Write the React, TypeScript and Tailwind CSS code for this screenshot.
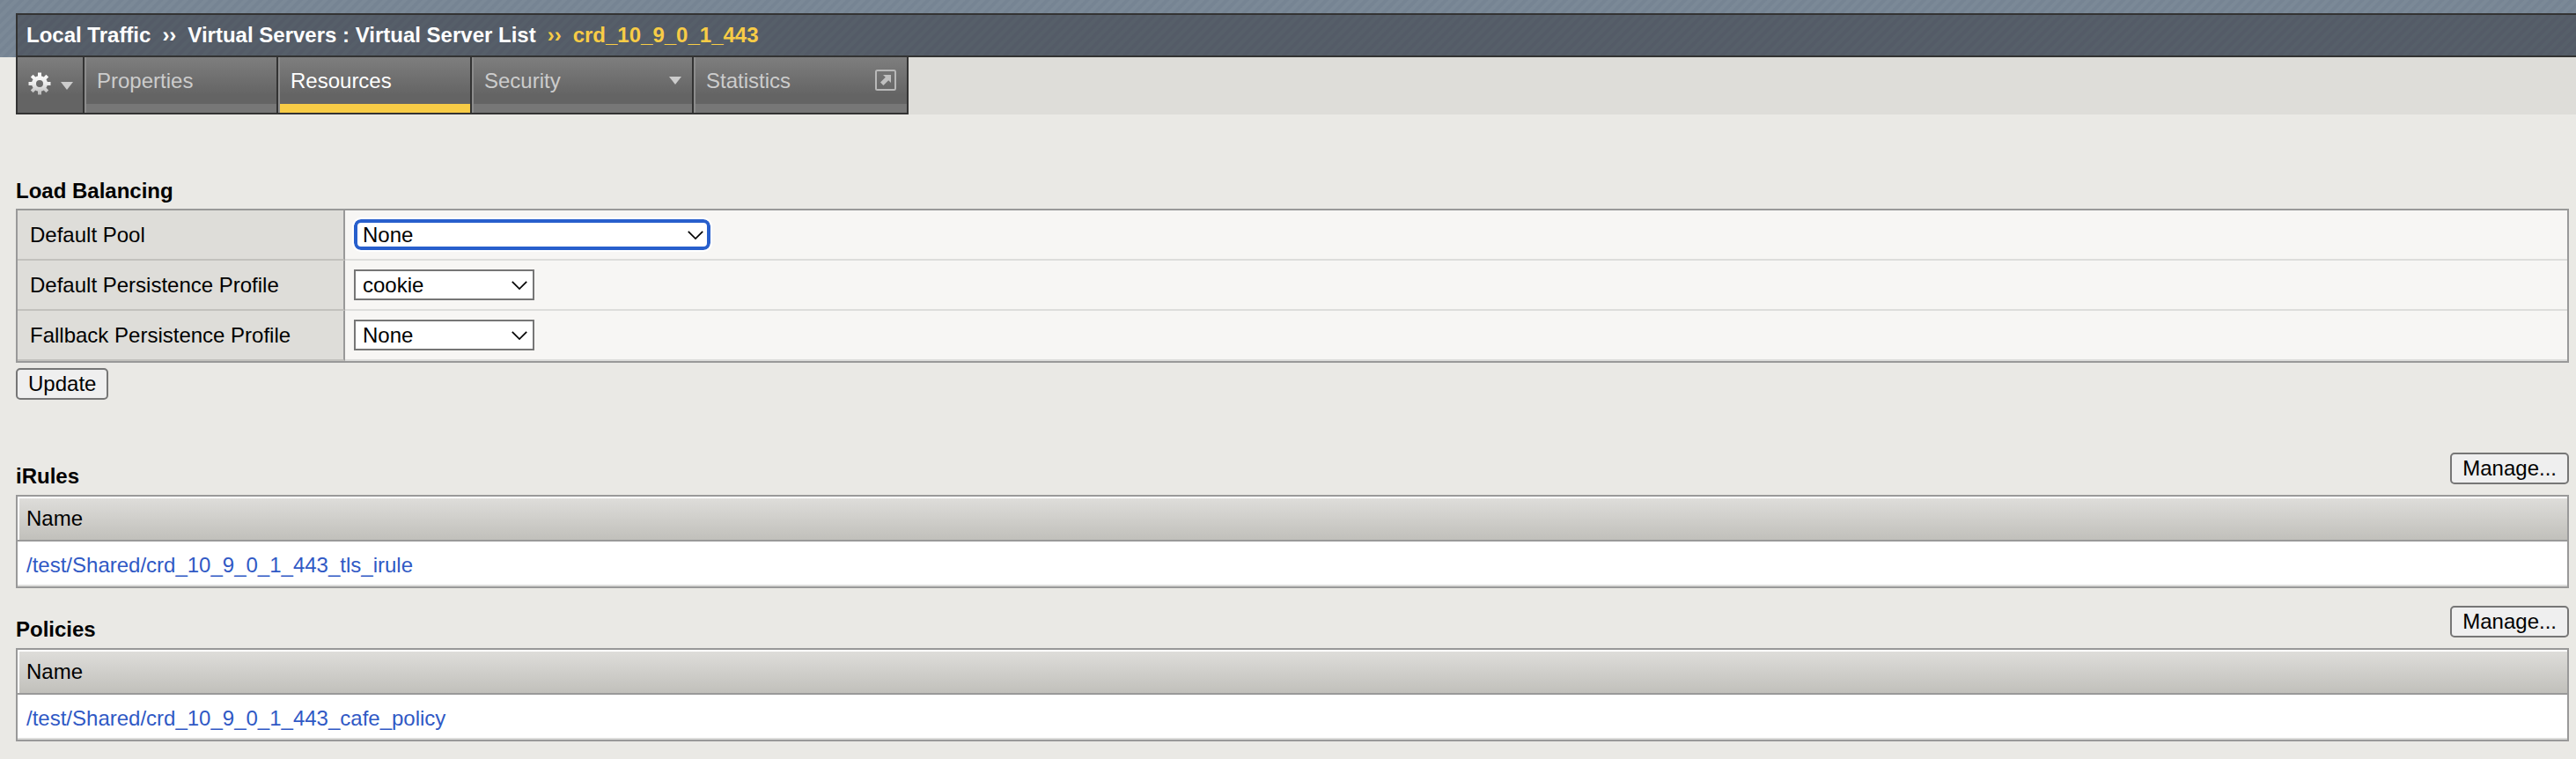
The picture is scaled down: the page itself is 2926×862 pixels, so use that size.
import React from "react";
import type { ReactNode } from "react";

function GearIcon() {
  return (
    <svg viewBox="0 0 26 26" className="h-[26px] w-[26px]" aria-hidden="true">
      <defs>
        <linearGradient id="gear" gradientUnits="userSpaceOnUse" x1="0" y1="0" x2="0" y2="26">
          <stop offset="0" stopColor="#ffffff" />
          <stop offset="0.5" stopColor="#ececec" />
          <stop offset="1" stopColor="#b4b4b4" />
        </linearGradient>
      </defs>
      <circle cx="13" cy="13" r="6.500" fill="none" stroke="url(#gear)" strokeWidth="5" />
      <path
        d="M13 .5v4.500M13 21v4.500M.5 13H5M21 13h4.500M4.200 4.200l3.200 3.200M18.600 18.600l3.200 3.200M21.800 4.200l-3.200 3.200M7.400 18.600l-3.200 3.200"
        fill="none"
        stroke="url(#gear)"
        strokeWidth="4"
      />
    </svg>
  );
}

function CaretIcon() {
  return (
    <svg viewBox="0 0 14 9" className="h-[9px] w-[14px]" aria-hidden="true">
      <path d="M0 0h14L7 9z" fill="#cccccc" />
    </svg>
  );
}

function PopOutIcon() {
  return (
    <svg viewBox="0 0 24 24" className="h-6 w-6" aria-hidden="true">
      <rect x="1" y="1" width="22" height="22" rx="1.500" fill="none" stroke="#b8b8b8" strokeWidth="2" />
      <path d="M9 6h9v9l-2.800-2.800L9.400 18 6 14.600l5.800-5.800z" fill="#c0c0c0" />
    </svg>
  );
}

function Tab({ label, width, active, icon }: { label: string; width: string; active?: boolean; icon?: ReactNode }) {
  return (
    <a
      href="#"
      className={`flex items-start justify-between border-r-2 border-b-2 border-r-[#333333] border-b-[#333333] pr-3 pl-[14px] shadow-[inset_2px_0_0_#8c8c8c] ${width} ${
        active
          ? "bg-[linear-gradient(#7e7e7e,#646464_43px,#646464_53px,#f8cc46_53px)] text-white"
          : "bg-[linear-gradient(#7e7e7e,#646464_43px,#646464_53px,#777777_53px)] text-[#cccccc]"
      }`}
    >
      <span className="pt-[13px] leading-7">{label}</span>
      {icon}
    </a>
  );
}

function SelectRow({ id, label, options, wide }: { id: string; label: string; options: string[]; wide?: boolean }) {
  return (
    <tr className="h-[57px]">
      <th
        scope="row"
        className="w-[372px] border-r-2 border-b-2 border-r-[#999999] border-b-[#c2c1bd] bg-[#deddd9] pl-[14px] text-left font-normal"
      >
        <label htmlFor={id}>{label}</label>
      </th>
      <td className="border-b-2 border-[#dddddb] bg-[#f7f6f4] pl-[10px]">
        <div className="relative flex w-fit items-center">
          <select
            id={id}
            className={
              wide
                ? "h-[35px] w-[405px] appearance-none rounded-[8px] border-4 border-[#285fcc] bg-white pl-[6px] leading-none outline-2 outline-white"
                : "h-[35px] w-[205px] appearance-none border-2 border-[#767676] bg-white pl-2 leading-none outline-none"
            }
          >
            {options.map((o) => (
              <option key={o}>{o}</option>
            ))}
          </select>
          <svg viewBox="0 0 18 10" className="pointer-events-none absolute right-2 h-[10px] w-[18px]" aria-hidden="true">
            <path d="M.8.8L9 9l8.200-8.200" fill="none" stroke="#000" strokeWidth="1.700" />
          </svg>
        </div>
      </td>
    </tr>
  );
}

function Button({ children }: { children: ReactNode }) {
  return (
    <button
      type="button"
      className="h-9 rounded-[5px] border-2 border-[#767676] bg-[#efefef] px-3 leading-8"
    >
      {children}
    </button>
  );
}

function NameList({ title, link }: { title: string; link: string }) {
  return (
    <section>
      <div className="flex h-12 items-start justify-between">
        <h2 className="pt-[13px] leading-7 font-bold">{title}</h2>
        <Button>Manage...</Button>
      </div>
      <table className="w-full border-separate border-spacing-0 border-2 border-[#999999]">
        <thead>
          <tr>
            <th
              scope="col"
              className="h-[51px] border-b-2 border-[#999999] bg-[linear-gradient(#dfdedb,#c1c0bb)] pl-[10px] text-left font-normal shadow-[inset_2px_2px_0_#ffffff]"
            >
              Name
            </th>
          </tr>
        </thead>
        <tbody>
          <tr>
            <td className="h-[51px] border-b-2 border-[#dddddb] bg-white pt-1 pl-[10px]">
              <a href="#" className="text-[#3059c5]">
                {link}
              </a>
            </td>
          </tr>
        </tbody>
      </table>
    </section>
  );
}

export default function App() {
  return (
    <div className="min-h-screen bg-[#eae9e5] font-['Liberation_Sans',Arial,sans-serif] text-2xl leading-7 text-black">
      <header className="bg-[repeating-linear-gradient(135deg,#768493_0px,#768493_3px,#7b8997_4px,#7b8997_7px,#768493_8px)] pt-[15px] pl-[18px]">
        <nav
          aria-label="Breadcrumb"
          className="flex h-[50px] items-center border-y-2 border-l-2 border-[#333333] bg-[repeating-linear-gradient(135deg,#545b67_0px,#545b67_3px,#565f69_4px,#565f69_7px,#545b67_8px)] pl-[10px] font-bold whitespace-pre text-white"
        >
          <span>Local Traffic</span>
          <span className="px-[13px]">››</span>
          <span>Virtual Servers : Virtual Server List</span>
          <span className="px-[13px] text-[#f8cc46]">››</span>
          <span className="text-[#f8cc46]">crd_10_9_0_1_443</span>
        </nav>
      </header>

      <div className="pl-[18px]">
        <nav aria-label="Sections" className="flex h-[65px] bg-[#deddd9]">
          <button
            type="button"
            aria-label="Settings"
            className="flex w-[78px] items-start gap-[11px] border-x-2 border-b-2 border-[#333333] bg-[linear-gradient(#7e7e7e,#646464_43px)] pt-[17px] pl-3"
          >
            <GearIcon />
            <span className="flex pt-[11px]">
              <CaretIcon />
            </span>
          </button>
          <Tab label="Properties" width="w-[220px]" />
          <Tab label="Resources" width="w-[220px]" active />
          <Tab label="Security" width="w-[252px]" icon={<span className="pt-[22px]"><CaretIcon /></span>} />
          <Tab label="Statistics" width="w-[244px]" icon={<span className="pt-[14px]"><PopOutIcon /></span>} />
        </nav>
      </div>

      <main className="pt-[73px] pr-2 pb-5 pl-[18px]">
        <section>
          <h2 className="pb-[6px] leading-7 font-bold">Load Balancing</h2>
          <table className="w-full border-separate border-spacing-0 border-2 border-[#999999]">
            <tbody>
              <SelectRow id="default-pool" label="Default Pool" options={["None"]} wide />
              <SelectRow id="default-persistence" label="Default Persistence Profile" options={["cookie", "None"]} />
              <SelectRow id="fallback-persistence" label="Fallback Persistence Profile" options={["None"]} />
            </tbody>
          </table>
          <div className="flex pt-[6px] pb-[60px]">
            <Button>Update</Button>
          </div>
        </section>
        <div className="flex flex-col gap-5">
          <NameList title="iRules" link="/test/Shared/crd_10_9_0_1_443_tls_irule" />
          <NameList title="Policies" link="/test/Shared/crd_10_9_0_1_443_cafe_policy" />
        </div>
      </main>
    </div>
  );
}
